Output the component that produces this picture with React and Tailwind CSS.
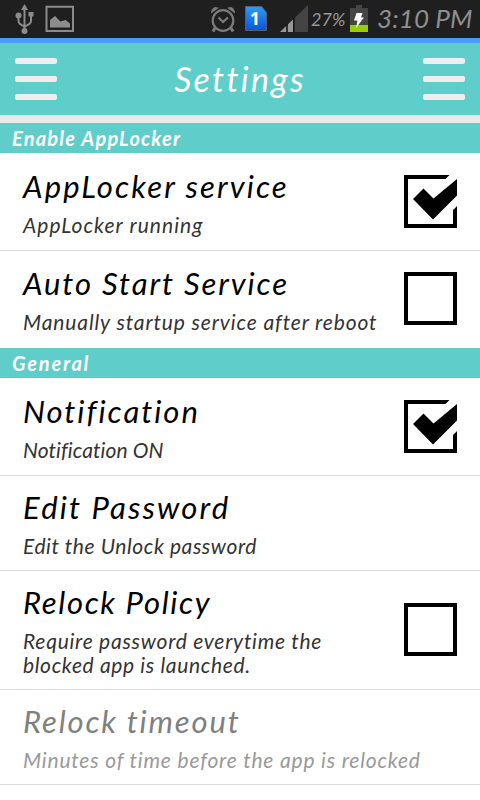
const hand = "font-['Choco_cooky',Lato,sans-serif] italic whitespace-nowrap";

function UsbIcon() {
  return (
    <svg className="w-[20px] h-[32px]" viewBox="0 0 20 32" fill="none" stroke="#8c8c8c" strokeWidth="2">
      <path d="M9.500 5v22M3.500 12v5q0 3 6 5.500M16 10v7q0 3-6.500 5.500" />
      <path d="M9.500 0l3.500 6h-7z" fill="#8c8c8c" stroke="none" />
      <circle cx="3.500" cy="11.500" r="3" fill="#8c8c8c" stroke="none" />
      <path d="M13.500 8h5v4.500h-5z" fill="#8c8c8c" stroke="none" />
      <circle cx="9.500" cy="27" r="3" fill="#8c8c8c" stroke="none" />
    </svg>
  );
}

function PictureIcon() {
  return (
    <svg className="w-[30px] h-[28px]" viewBox="0 0 30 28">
      <path d="M1.500 1.800h26.500v24.200h-26.500z" fill="none" stroke="#8c8c8c" strokeWidth="2" />
      <path d="M5 22.500V15l5-4 5.500 5.500 5-1.500 4.500 3.500v4z" fill="#8c8c8c" />
    </svg>
  );
}

function AlarmIcon() {
  return (
    <svg className="w-[26px] h-[28px]" viewBox="0 0 26 28" fill="none" stroke="#7c7c7c" strokeWidth="2.200">
      <circle cx="13" cy="15.500" r="10.300" />
      <path d="M8.500 12.500l4.500 4.500 5-4.500" />
      <path d="M5 23L3 26.500M21 23l2 3.500" strokeWidth="3" />
      <path d="M1 8.500q0-5 4-6.500l4 .8zM25 8.500q0-5-4-6.500l-4 .8z" fill="#7c7c7c" stroke="none" />
    </svg>
  );
}

function SimIcon() {
  return (
    <svg className="w-[22px] h-[25px]" viewBox="0 0 22 25">
      <defs>
        <linearGradient id="sim" x1="0" y1="0" x2="0" y2="1">
          <stop offset="0" stopColor="#2b9df0" />
          <stop offset="1" stopColor="#0d50e0" />
        </linearGradient>
      </defs>
      <path d="M.5.5h16l5 6v18H.5z" fill="url(#sim)" stroke="#5a5f66" />
      <text x="9.800" y="19" textAnchor="middle" fill="#fff" fontSize="18" fontWeight="700" fontFamily="Noto Sans, sans-serif">1</text>
    </svg>
  );
}

function SignalIcon() {
  return (
    <svg className="w-[28px] h-[27px]" viewBox="0 0 28 27">
      <path d="M0 27L28 0v27z" fill="#444" />
      <path d="M0 27L14 13.500V27z" fill="#979797" />
      <path d="M7 19v8M13.800 13v14" stroke="#111" strokeWidth="1.500" />
    </svg>
  );
}

function BatteryIcon() {
  return (
    <svg className="w-[18px] h-[27px]" viewBox="0 0 18 27">
      <path d="M0 3h6V0h6v3h6v24H0z" fill="#454545" />
      <path d="M0 20h18v7H0z" fill="#96d000" />
      <path d="M6.500 8h6l-1.500 4.500h3L6 23l1.500-7.500H4z" fill="#fff" />
    </svg>
  );
}

function MenuBars() {
  return (
    <div className="flex h-[42px] w-[42px] flex-col justify-between">
      <span className="h-[6px] rounded-[2px] bg-[#eee]" />
      <span className="h-[6px] rounded-[2px] bg-[#eee]" />
      <span className="h-[6px] rounded-[2px] bg-[#eee]" />
    </div>
  );
}

function CheckBox({ checked }) {
  return (
    <svg className="h-[53px] w-[53px] shrink-0" viewBox="0 0 53 53" role="checkbox" aria-checked={checked}>
      <path d="M2 2h49v49H2z" fill="#fff" stroke="#000" strokeWidth="4" />
      {checked && (
        <>
          <path d="M46.500 -1L41 4.500L30 17L45 42L49 35L54 31V-1z" fill="#fff" />
          <path d="M49.500 35L53 31V53H49.500z" fill="#000" />
          <path d="M9 24L19.500 13.500L29.500 23.500L53 4V20.500L29 44.500z" fill="#000" />
        </>
      )}
    </svg>
  );
}

function SectionHeader({ children, fit }) {
  return (
    <div className="flex h-[30px] shrink-0 items-center bg-[#5fcdca] pl-[12px]">
      <span className={`${hand} text-[20px] font-bold text-white ${fit}`}>{children}</span>
    </div>
  );
}

const service = [
  { title: 'AppLocker service', lines: ['AppLocker running'], row: 'h-[98px] border-b pt-[15px]', titleFit: 'tracking-[2.1px]', fits: ['tracking-[1.05px]'], checked: true },
  { title: 'Auto Start Service', lines: ['Manually startup service after reboot'], row: 'h-[97px] pt-[14px]', titleFit: 'tracking-[1.9px]', fits: ['tracking-[0.88px]'], checked: false },
];

const general = [
  { title: 'Notification', lines: ['Notification ON'], row: 'h-[98px] border-b pt-[15px]', titleFit: 'tracking-[2px]', fits: ['tracking-[0.1px]'], checked: true },
  { title: 'Edit Password', lines: ['Edit the Unlock password'], row: 'h-[95px] border-b pt-[13px]', titleFit: 'tracking-[2.15px]', fits: ['tracking-[0.57px]'] },
  { title: 'Relock Policy', lines: ['Require password everytime the', 'blocked app is launched.'], row: 'h-[119px] border-b pt-[13px]', titleFit: 'tracking-[1.65px]', fits: ['tracking-[0.75px]', 'tracking-[0.65px]'], checked: false },
  { title: 'Relock timeout', lines: ['Minutes of time before the app is relocked'], row: 'h-[95px] border-b pt-[13px]', titleFit: 'tracking-[1.85px]', fits: ['tracking-[0.82px]'], disabled: true },
];

function Row({ title, lines, row, titleFit, fits, checked, disabled }) {
  return (
    <div className={`flex shrink-0 justify-between border-[#dcdcdc] pl-[23px] pr-[23px] ${row}`}>
      <div>
        <div className={`${hand} text-[31px] leading-[36px] ${titleFit} ${disabled ? 'text-[#808080]' : 'text-black'}`}>{title}</div>
        <div className={`mt-[9px] ${disabled ? 'text-[#999]' : 'text-[#333]'}`}>
          {lines.map((line, i) => (
            <div key={line} className={`${hand} text-[21px] leading-[24px] ${fits[i]}`}>{line}</div>
          ))}
        </div>
      </div>
      {checked !== undefined && (
        <div className={lines.length > 1 ? 'mt-[19px]' : 'mt-[7px]'}>
          <CheckBox checked={checked} />
        </div>
      )}
    </div>
  );
}

export default function App() {
  return (
    <div className="flex h-[800px] w-[480px] flex-col overflow-hidden bg-white">
      <div className="flex h-[38px] shrink-0 items-start bg-[#1f1f1f]">
        <div className="ml-[15px] mt-[4px]"><UsbIcon /></div>
        <div className="ml-[10px] mt-[5px]"><PictureIcon /></div>
        <div className="ml-[135px] mt-[5px]"><AlarmIcon /></div>
        <div className="ml-[9px] mt-[6px]"><SimIcon /></div>
        <div className="ml-[13px] mt-[5px]"><SignalIcon /></div>
        <div className={`${hand} ml-[3px] mt-[8px] w-[39px] text-[18px] leading-[22px] text-[#999]`}>27%</div>
        <div className="mt-[5px]"><BatteryIcon /></div>
        <div className={`${hand} ml-[9px] mt-[3px] text-[26px] leading-[30px] tracking-[0.1px] text-[#8f8f8f]`}>3:10 PM</div>
      </div>
      <div className="h-[5px] shrink-0 bg-[#4a9cff]" />
      <div className="flex h-[72px] shrink-0 items-start justify-between bg-[#5fcdca] px-[15px] pt-[15px]">
        <MenuBars />
        <h1 className={`${hand} text-[34px] leading-[42px] tracking-[2.3px] text-white`}>Settings</h1>
        <MenuBars />
      </div>
      <div className="h-[8px] shrink-0 bg-[#eaeaea]" />
      <SectionHeader fit="tracking-[1.2px]">Enable AppLocker</SectionHeader>
      {service.map((item) => <Row key={item.title} {...item} />)}
      <SectionHeader fit="tracking-[1.8px]">General</SectionHeader>
      {general.map((item) => <Row key={item.title} {...item} />)}
    </div>
  );
}
